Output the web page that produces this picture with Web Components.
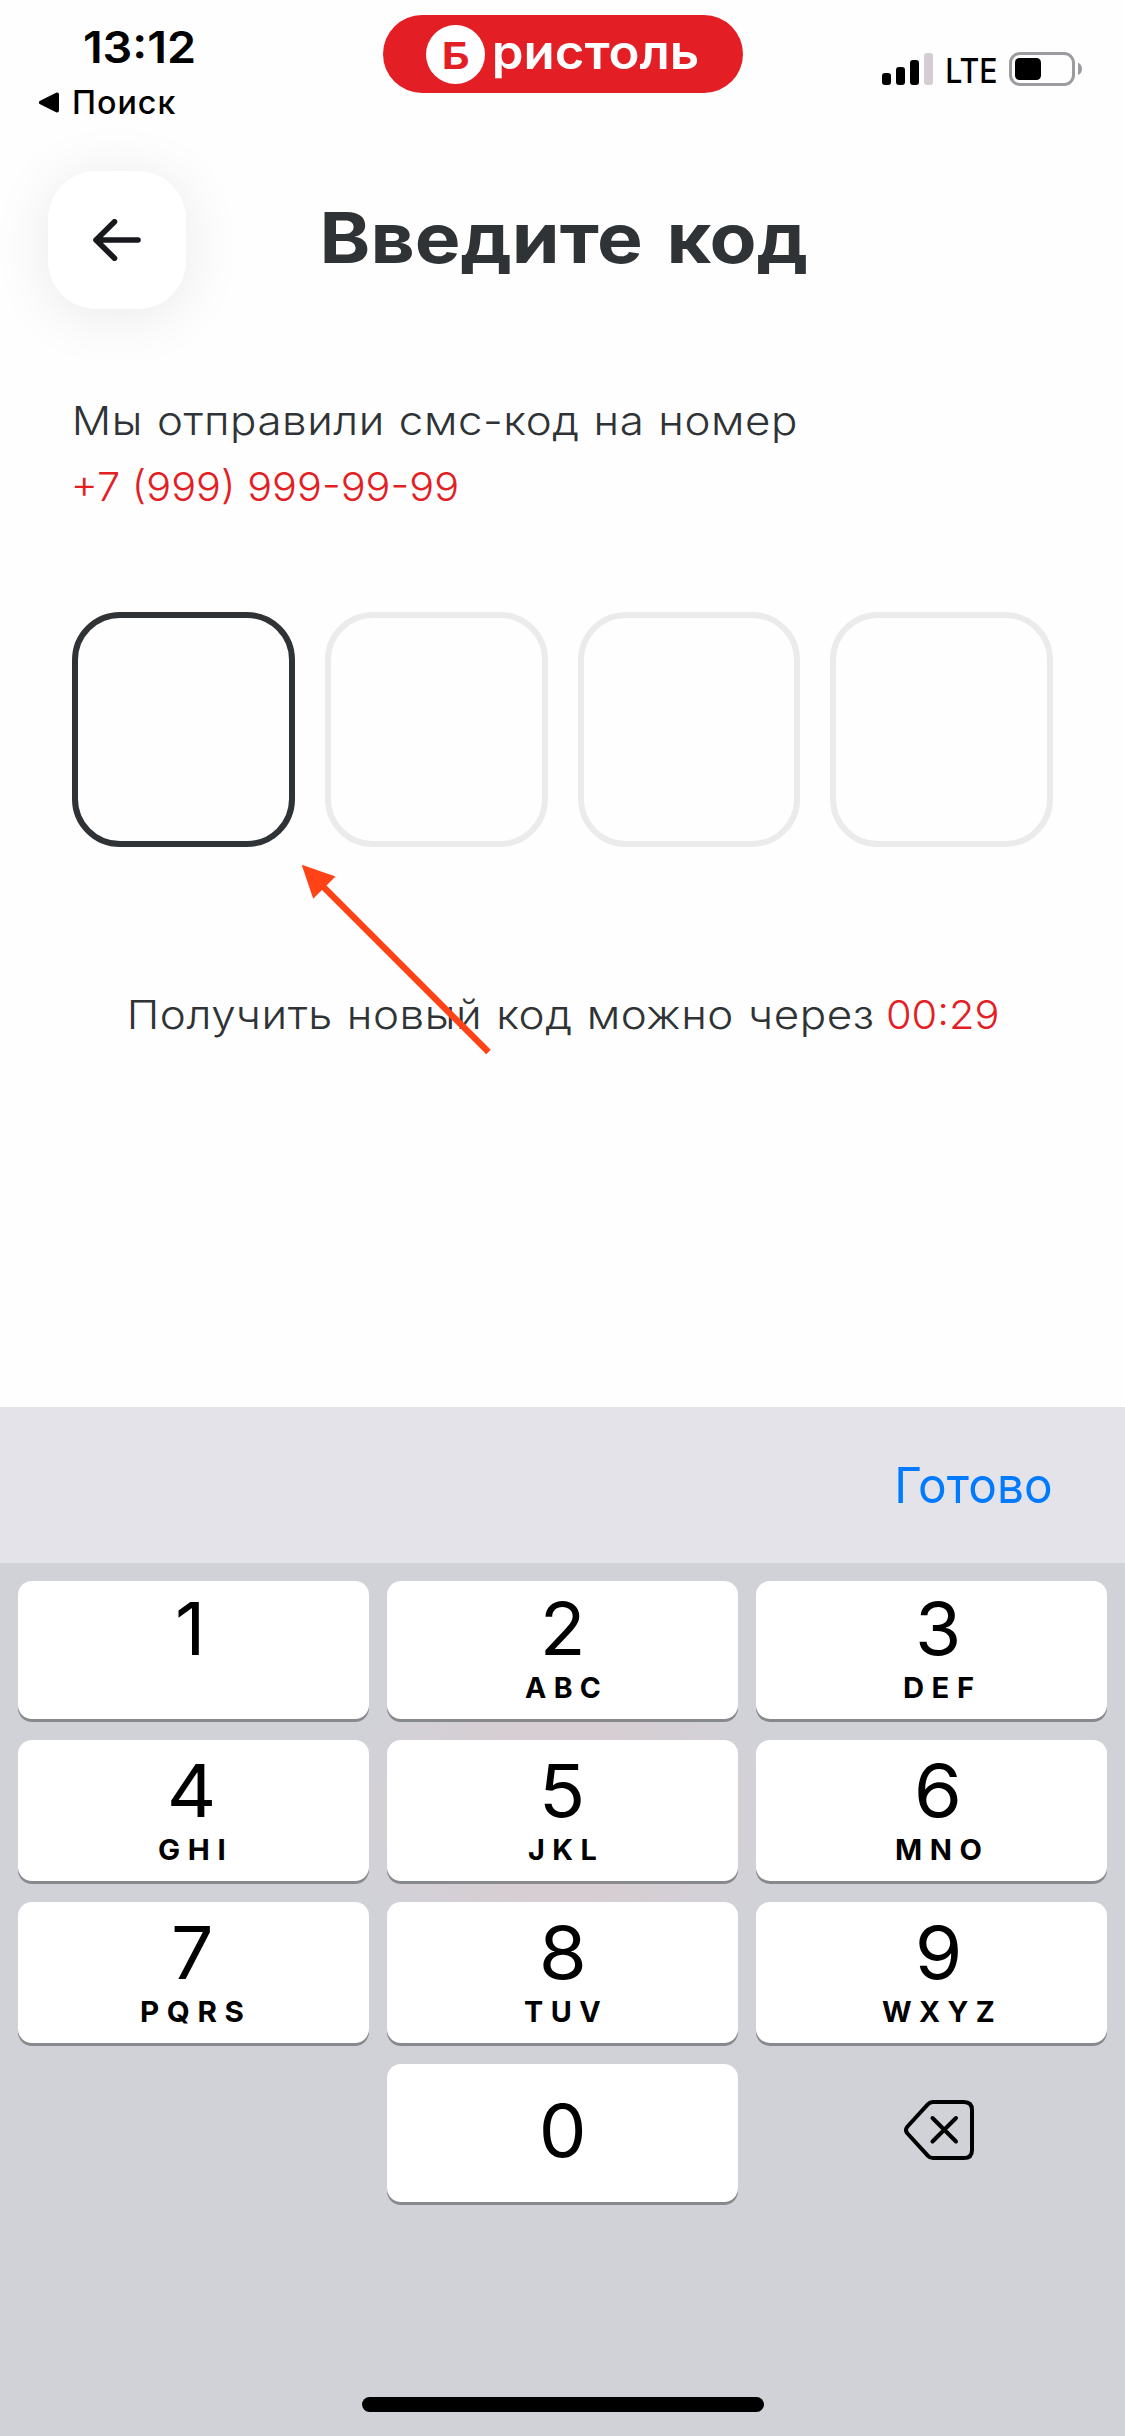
<!DOCTYPE html>
<html lang="ru">
<head>
<meta charset="utf-8">
<title>Введите код</title>
<style>
  html, body { margin: 0; padding: 0; }
  body { font-family: Inter, "Noto Sans", sans-serif; background: #fefefe; }
</style>
</head>
<body>
<code-screen></code-screen>
<script>
const define = (name, html, setup) => {
  const template = document.createElement('template');
  template.innerHTML = html;
  customElements.define(name, class extends HTMLElement {
    constructor() {
      super();
      this.attachShadow({ mode: 'open' }).append(template.content.cloneNode(true));
    }
    connectedCallback() { if (setup) setup(this, this.shadowRoot); }
  });
};

const measure = document.createElement('canvas').getContext('2d');

// A single line of text whose visible ink spans exactly `w` pixels.
// The capitals are centred on the box, which is `h` pixels high.
define('fit-text', `
  <style>
    :host { display: block; flex: none; }
    span { display: block; width: max-content; white-space: pre; transform-origin: 0 0; }
  </style>
  <span><slot></slot></span>`, (host, root) => {
  const w = +host.getAttribute('w'), size = +host.getAttribute('size');
  const weight = host.getAttribute('weight') || '400';
  const gap = host.getAttribute('gap') || '0';
  const words = host.getAttribute('words') || '0';
  const h = host.getAttribute('h') || size;
  measure.font = `${weight} ${size}px Inter, "Noto Sans", sans-serif`;
  measure.letterSpacing = gap + 'px';
  measure.wordSpacing = words + 'px';
  const m = measure.measureText(host.textContent);
  const k = w / (m.actualBoundingBoxLeft + m.actualBoundingBoxRight);
  host.style.width = w + 'px';
  host.style.height = h + 'px';
  root.querySelector('span').style.cssText =
    `font-size:${size}px;font-weight:${weight};letter-spacing:${gap}px;word-spacing:${words}px;line-height:${h}px;` +
    `transform:translateX(${m.actualBoundingBoxLeft * k}px) scaleX(${k})`;
});

define('brand-pill', `
  <style>
    :host { display: flex; align-items: center; box-sizing: border-box; flex: none; width: 360px; height: 78px;
            border-radius: 39px; background: #e31e24; color: #fff; padding-left: 43.5px; }
    .disc { display: flex; align-items: center; justify-content: center; width: 59px; height: 59px;
            border-radius: 50%; background: #fff; color: #e31e24; margin-right: 10px; }
    .disc fit-text { margin-top: 3px; margin-left: 2px; }
    .rest { margin-bottom: 5px; }
  </style>
  <div class="disc"><fit-text w="24.5" size="37" weight="700">Б</fit-text></div>
  <fit-text class="rest" w="203" size="47" weight="600">ристоль</fit-text>`);

define('signal-bars', `
  <style>
    :host { display: flex; align-items: flex-end; gap: 5px; height: 32px; }
    i { width: 9px; border-radius: 3px; background: #000; }
    i:nth-of-type(1) { height: 12px; } i:nth-of-type(2) { height: 18px; }
    i:nth-of-type(3) { height: 25px; } i:nth-of-type(4) { height: 32px; background: #d5cdd3; }
  </style><i></i><i></i><i></i><i></i>`);

define('battery-icon', `
  <style>:host { display: block; width: 74px; height: 34px; } svg { display: block; }</style>
  <svg width="74" height="34" viewBox="0 0 74 34">
    <rect x="1.5" y="1.5" width="63" height="31" rx="9.5" fill="none" stroke="#9c9b9f" stroke-width="3"/>
    <rect x="6" y="6" width="26" height="22" rx="4.5"/>
    <path d="M69 10.5Q73 12.5 73 17T69 23Z" fill="#9c9b9f"/>
  </svg>`);

define('status-bar', `
  <style>
    :host { display: flex; align-items: flex-start; height: 171px; color: #000; }
    .left { width: 382.5px; box-sizing: border-box; padding: 25px 0 0 39px; }
    .time { margin-left: 46px; }
    .back { display: flex; align-items: center; gap: 15px; margin-top: 12px; }
    .back svg { display: block; }
    brand-pill { margin-top: 15px; }
    .right { display: flex; align-items: flex-start; margin: 52px 0 0 139.5px; }
    signal-bars { margin: 1px 13.5px 0 0; }
    battery-icon { margin-left: 13.5px; }
  </style>
  <div class="left">
    <fit-text class="time" w="108.5" size="44" weight="600">13:12</fit-text>
    <div class="back">
      <svg width="20" height="21" viewBox="0 0 20 21"><path d="M2 10.5 18 2.5V18.5Z" stroke="#000" stroke-width="4" stroke-linejoin="round"/></svg>
      <fit-text w="101" size="33" h="42" weight="500" gap="1">Поиск</fit-text>
    </div>
  </div>
  <brand-pill></brand-pill>
  <div class="right">
    <signal-bars></signal-bars>
    <fit-text w="49" size="34.5" h="37" weight="500">LTE</fit-text>
    <battery-icon></battery-icon>
  </div>`);

define('back-button', `
  <style>
    :host { display: flex; align-items: center; justify-content: center; flex: none; width: 138px; height: 138px;
            border-radius: 48px; background: #fff; box-shadow: 0 6px 60px rgba(0,0,0,.085); }
  </style>
  <svg width="48" height="42" viewBox="0 0 48 42" fill="none" stroke="#17191c" stroke-width="5.6" stroke-linecap="round" stroke-linejoin="round">
    <path d="M45 21H3M21.5 2.8 3 21 21.5 39.2"/>
  </svg>`);

define('code-cell', `
  <style>
    :host { display: block; flex: 1; box-sizing: border-box; height: 235px; border: 6px solid #ebebeb; border-radius: 48px; }
    :host([active]) { border-color: #2f3336; }
  </style>`);

define('pointer-arrow', `
  <style>:host { position: absolute; left: 300px; top: 863px; pointer-events: none; } svg { display: block; }</style>
  <svg width="194" height="194" viewBox="300 863 194 194" fill="#ff4317">
    <path d="M320 883.5 488.5 1052" stroke="#ff4317" stroke-width="6.4"/>
    <path d="M301.7 864.8 335.5 876.5 313.2 898.8Z"/>
  </svg>`);

// Digit and letters are anchored to the key's bottom edge; side keys lean outwards.
define('num-key', `
  <style>
    :host { display: flex; flex-direction: column; align-items: center; justify-content: flex-end; box-sizing: border-box;
            background: #fff; border-radius: 14px; box-shadow: 0 3px 0 #88898d; padding-bottom: 53.5px; }
    :host([zero]) { padding-bottom: 34.5px; }
    :host([left]) { padding-right: 4px; }
    :host([right]) { padding-left: 13px; }
    :host([plain]) { padding-right: 10px; }
    ::slotted([slot=sub]) { margin: 7.5px 0 -36.5px; }
  </style>
  <slot></slot><slot name="sub"></slot>`);

define('key-pad', `
  <style>
    :host { display: block; flex: 1; box-sizing: border-box; padding: 18px 18px 0; color: #000;
            background: radial-gradient(ellipse 220px 180px at 562px 248px, #d6ced3 0, #d6ced3 50%, #d1d2d8 100%); background-color: #d1d2d8; }
    .grid { display: grid; grid-template-columns: repeat(3, 351px); grid-template-rows: 138px 141px 141px 138px; gap: 21px 18px; }
    .del { grid-column: 3; display: flex; align-items: center; justify-content: center; padding: 0 0 7px 14px; }
    num-key[zero] { grid-column: 2; }
    .home { width: 402px; height: 15px; border-radius: 8px; background: #000; margin: 195px auto 0; }
  </style>
  <div class="grid"></div>
  <div class="home"></div>`, (host, root) => {
  const keys = [
    ['1', 21.5], ['2', 36, 'ABC', 75.5], ['3', 38, 'DEF', 69],
    ['4', 41, 'GHI', 65.5], ['5', 37.8, 'JKL', 68.5], ['6', 39.5, 'MNO', 84.5],
    ['7', 36, 'PQRS', 102], ['8', 39.5, 'TUV', 75], ['9', 39, 'WXYZ', 111.5]
  ];
  const sides = ['left', '', 'right'];
  const letters = (text, w) => text
    ? `<fit-text slot="sub" w="${w}" size="29" h="29" weight="650" gap="7.5">${text}</fit-text>`
    : '<div slot="sub" style="height:29px"></div>';
  root.querySelector('.grid').innerHTML = keys.map(([d, w, sub, sw], i) =>
    `<num-key ${sub ? sides[i % 3] : 'plain'}><fit-text w="${w}" size="73" h="74">${d}</fit-text>${letters(sub, sw)}</num-key>`
  ).join('') +
    `<num-key zero><fit-text w="39.5" size="73" h="74">0</fit-text></num-key>
     <div class="del"><svg width="70" height="60" viewBox="0 0 70 60" fill="none" stroke="#000" stroke-width="4" stroke-linecap="round" stroke-linejoin="round">
       <path d="M29 2H60Q68 2 68 10V50Q68 58 60 58H29Q26 58 24 55.8L3.5 33.5Q.5 30 3.5 26.500L24 4.200Q26 2 29 2Z"/>
       <path d="M28.500 18 52 41.500M52 18 28.500 41.500"/></svg></div>`;
});

define('code-screen', `
  <style>
    :host { display: flex; flex-direction: column; position: relative; width: 1125px; height: 2436px; overflow: hidden;
            background: #fefefe; color: #2f3336; }
    header { display: flex; align-items: center; height: 138px; padding-left: 48px; gap: 138px; }
    header fit-text { margin-bottom: 4px; }
    .sent { height: 303px; box-sizing: border-box; padding: 88px 0 0 75px; }
    .phone, .timer { color: #e31e24; }
    .cells { display: flex; gap: 30px; padding: 0 72px; }
    .resend { display: flex; gap: 16px; padding: 144px 0 0 129.500px; height: 560px; box-sizing: border-box; }
    .bar { display: flex; justify-content: flex-end; align-items: center; flex: none; height: 156px; background: #e4e3e9; padding-right: 74px; box-sizing: border-box; color: #007aff; }
  </style>
  <status-bar></status-bar>
  <header>
    <back-button></back-button>
    <fit-text w="482.500" size="69.500" h="80" weight="700" words="5">Введите код</fit-text>
  </header>
  <div class="sent">
    <fit-text w="720" size="40" h="48" weight="300" gap="0.500" words="1">Мы отправили смс-код на номер</fit-text>
    <fit-text class="phone" style="margin-top:18px" w="382" size="40" h="48" weight="300">+7 (999) 999-99-99</fit-text>
  </div>
  <div class="cells"><code-cell active></code-cell><code-cell></code-cell><code-cell></code-cell><code-cell></code-cell></div>
  <div class="resend">
    <fit-text w="742.500" size="40" h="48" weight="300" gap="0.500" words="1">Получить новый код можно через</fit-text>
    <fit-text class="timer" w="109.500" size="40" h="48" weight="300">00:29</fit-text>
  </div>
  <div class="bar"><fit-text w="153" size="49.500" h="60">Готово</fit-text></div>
  <key-pad></key-pad>
  <pointer-arrow></pointer-arrow>`);
</script>
</body>
</html>
